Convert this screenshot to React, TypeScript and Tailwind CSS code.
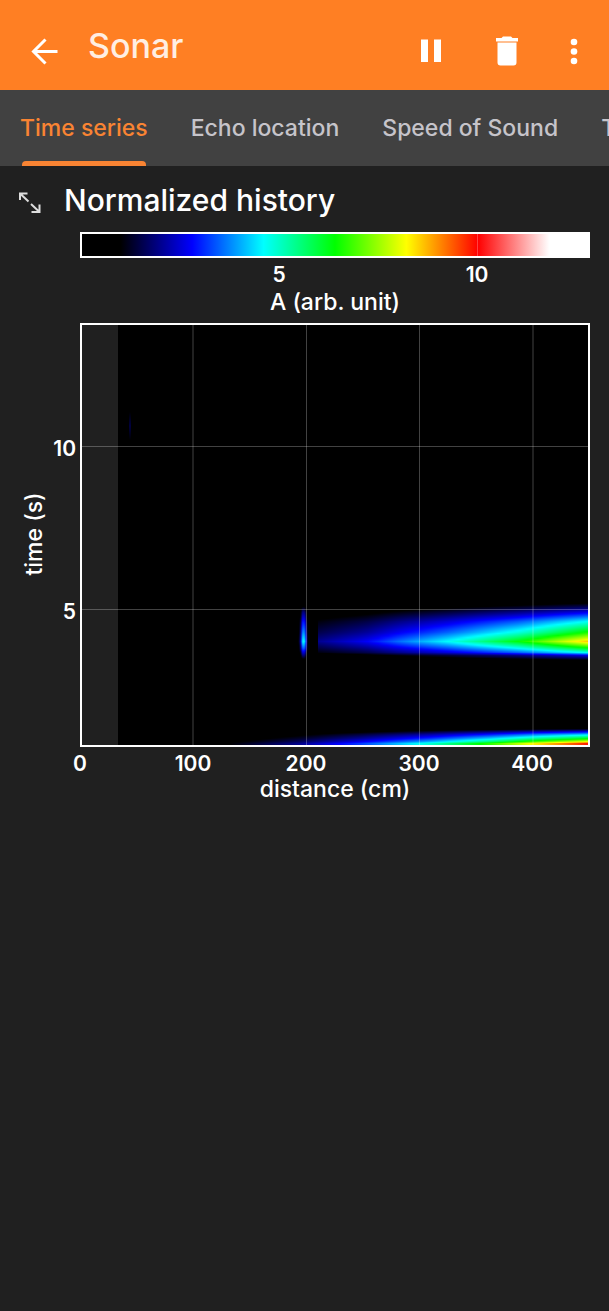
import { useState } from "react";

type Point = [number, number];

const TABS = ["Time series", "Echo location", "Speed of Sound", "T"];

// Amplitude -> colour map, in arbitrary units.
const COLOR_MAP: [number, [number, number, number]][] = [
  [0, [0, 0, 0]],
  [1, [0, 0, 0]],
  [2.8, [0, 0, 255]],
  [4.6, [0, 255, 255]],
  [6.4, [0, 255, 0]],
  [8.2, [255, 255, 0]],
  [10, [255, 0, 0]],
  [11.8, [255, 255, 255]],
  [12.8, [255, 255, 255]],
];

function interpolate(points: Point[], at: number): number {
  if (at <= points[0][0]) return points[0][1];
  for (let i = 1; i < points.length; i++) {
    const [x1, y1] = points[i];
    if (at <= x1) {
      const [x0, y0] = points[i - 1];
      return y0 + ((at - x0) / (x1 - x0)) * (y1 - y0);
    }
  }
  return points[points.length - 1][1];
}

function colorOf(value: number): string {
  const channels = [0, 1, 2].map((c) =>
    Math.round(interpolate(COLOR_MAP.map(([v, rgb]) => [v, rgb[c]] as Point), value)),
  );
  return `rgb(${channels.join(",")})`;
}

interface Echo {
  id: string;
  from: number;
  to: number;
  top: number;
  bottom: number;
  step: number;
  distance: Point[];
  time: Point[];
}

const ECHOES: Echo[] = [
  {
    id: "far",
    from: 318,
    to: 588,
    top: 602,
    bottom: 661,
    step: 10,
    distance: [[318, 2], [365, 2.7], [400, 3.6], [447, 4.6], [520, 6.4], [588, 8.6]],
    time: [[602, 0.1], [608, 0.22], [613, 0.34], [621, 0.54], [632, 0.76], [641, 1], [647, 0.76], [652, 0.55], [655, 0.3], [660, 0.1]],
  },
  {
    id: "near",
    from: 297,
    to: 308,
    top: 604,
    bottom: 660,
    step: 1,
    distance: [[297, 0.8], [299, 1.2], [301, 2.6], [302, 4], [303, 4.7], [305, 4.3], [306, 3], [308, 0.8]],
    time: [[604, 0.15], [612, 0.42], [622, 0.65], [632, 0.82], [641, 1], [648, 0.75], [653, 0.5], [659, 0.2]],
  },
  {
    id: "latest",
    from: 230,
    to: 588,
    top: 728,
    bottom: 745,
    step: 10,
    distance: [[230, 1], [300, 2], [360, 3.2], [430, 4.9], [490, 6.7], [535, 8.3], [588, 9.8]],
    time: [[728, 0.08], [731, 0.26], [734, 0.44], [738, 0.64], [741, 0.82], [743, 1]],
  },
];

function EchoShape({ echo }: { echo: Echo }) {
  const { id, from, to, top, bottom, step } = echo;
  const rows = Array.from({ length: bottom - top }, (_, i) => top + i);
  const samples = Array.from({ length: Math.ceil((to - from) / step) + 1 }, (_, i) =>
    Math.min(to, from + i * step),
  );
  return (
    <g shapeRendering="crispEdges">
      <defs>
        {rows.map((y) => (
          <linearGradient key={y} id={`${id}-${y}`}>
            {samples.map((x) => (
              <stop
                key={x}
                offset={(x - from) / (to - from)}
                stopColor={colorOf(interpolate(echo.distance, x) * interpolate(echo.time, y))}
              />
            ))}
          </linearGradient>
        ))}
      </defs>
      {rows.map((y) => (
        <rect key={y} x={from} y={y} width={to - from} height={1} fill={`url(#${id}-${y})`} />
      ))}
    </g>
  );
}

function HistoryChart() {
  return (
    <svg
      viewBox="0 224 609 584"
      className="block w-full fill-white"
      role="img"
      aria-label="Normalized history: amplitude by distance and time"
    >
      <defs>
        <linearGradient id="scale">
          {COLOR_MAP.map(([v]) => (
            <stop key={v} offset={v / 12.8} stopColor={colorOf(v)} />
          ))}
        </linearGradient>
        <linearGradient id="trace" x1="0" y1="0" x2="0" y2="1">
          <stop offset="0" stopColor="#000" />
          <stop offset="0.5" stopColor="#000040" />
          <stop offset="1" stopColor="#000" />
        </linearGradient>
      </defs>

      <rect x={81} y={233} width={508} height={24} fill="url(#scale)" stroke="#fff" strokeWidth={2} />
      <path d="M477.500 234V256" stroke="#fff" strokeOpacity={0.25} />
      <g className="text-[21px] font-semibold" textAnchor="middle">
        <text x={279} y={282}>5</text>
        <text x={477} y={282}>10</text>
      </g>
      <text x={335} y={310} textAnchor="middle" className="text-[23px] font-medium">A (arb. unit)</text>

      <rect x={118} y={324} width={470} height={421} fill="#000" />
      <rect x={129} y={412} width={2} height={28} fill="url(#trace)" />
      {ECHOES.map((echo) => (
        <EchoShape key={echo.id} echo={echo} />
      ))}
      <path
        d="M193 324V745M306.500 324V745M419.500 324V745M533 324V745M82 446.500H588M82 609.500H588"
        fill="none"
        stroke="#fff"
        strokeOpacity={0.26}
      />
      <rect x={81} y={324} width={508} height={422} fill="none" stroke="#fff" strokeWidth={2} />

      <g className="text-[21px] font-semibold" textAnchor="end">
        <text x={76} y={456}>10</text>
        <text x={76} y={619}>5</text>
      </g>
      <g className="text-[21px] font-semibold" textAnchor="middle">
        <text x={80} y={771}>0</text>
        <text x={193} y={771}>100</text>
        <text x={306} y={771}>200</text>
        <text x={419} y={771}>300</text>
        <text x={532} y={771}>400</text>
      </g>
      <text x={335} y={797} textAnchor="middle" className="text-[23px] font-medium">distance (cm)</text>
      <text transform="translate(42 534) rotate(-90)" textAnchor="middle" className="text-[23px] font-medium">
        time (s)
      </text>
    </svg>
  );
}

export default function App() {
  const [active, setActive] = useState(0);
  return (
    <div className="min-h-screen overflow-hidden bg-[#202020] font-['Inter',sans-serif] text-white">
      <header className="flex h-[90px] items-center bg-[#ff7f23] pt-3.5 pr-4 pl-6">
        <button type="button" aria-label="Back" className="flex size-10 items-center justify-center">
          <svg viewBox="0 0 40 40" className="size-10" fill="none" stroke="currentColor" strokeWidth={3}>
            <path d="M33.500 19.500H10M21.500 7.500L9.500 19.500L21.500 31.500" />
          </svg>
        </button>
        <h1 className="mb-3 ml-6 flex-1 text-[34px] leading-10 font-medium text-[#ffeee2]">Sonar</h1>
        <button type="button" aria-label="Pause" className="mr-9 flex size-10 items-center justify-center">
          <svg viewBox="0 0 40 40" className="size-10" fill="currentColor">
            <path d="M12 7.500h7v22.500h-7zM25 7.500h7v22.500h-7z" />
          </svg>
        </button>
        <button type="button" aria-label="Clear data" className="mr-7 flex size-10 items-center justify-center">
          <svg viewBox="0 0 40 40" className="size-10" fill="currentColor">
            <path d="M11 6h5.500l1.500-1.500h8l1.500 1.500H33v3.500H11zM12.500 10.500h19V30.500a3 3 0 0 1-3 3H15.500a3 3 0 0 1-3-3z" />
          </svg>
        </button>
        <button type="button" aria-label="More options" className="flex size-10 items-center justify-center">
          <svg viewBox="0 0 40 40" className="size-10" fill="currentColor">
            <circle cx="21" cy="10" r="3.300" />
            <circle cx="21" cy="19.500" r="3.300" />
            <circle cx="21" cy="29" r="3.300" />
          </svg>
        </button>
      </header>

      <nav role="tablist" className="flex h-[76px] gap-[43px] overflow-hidden bg-[#414141] pl-5">
        {TABS.map((tab, i) => (
          <button
            key={tab}
            type="button"
            role="tab"
            aria-selected={active === i}
            onClick={() => setActive(i)}
            className={
              active === i
                ? "flex shrink-0 flex-col items-center text-[23px] leading-[76px] font-medium text-[#f98433]"
                : "flex shrink-0 flex-col items-center text-[23px] leading-[76px] font-medium text-[#c6c4ca]"
            }
          >
            <span>{tab}</span>
            {active === i && <span className="-mt-[5px] h-[5px] w-[124px] rounded-t bg-[#f98433]" />}
          </button>
        ))}
      </nav>

      <main>
        <div className="flex h-[58px] items-start pl-4">
          <svg viewBox="0 0 28 28" className="mt-6 size-7 shrink-0" fill="none" stroke="#ddd" strokeWidth={2}>
            <path d="M4 10V3.500H11.500M4 3.500L12.500 11.500M15 14L23.500 22M23.500 14.500V22H15.500" />
          </svg>
          <h2 className="mt-4 ml-5 text-[30px] leading-9 font-medium">Normalized history</h2>
        </div>
        <HistoryChart />
      </main>
    </div>
  );
}
